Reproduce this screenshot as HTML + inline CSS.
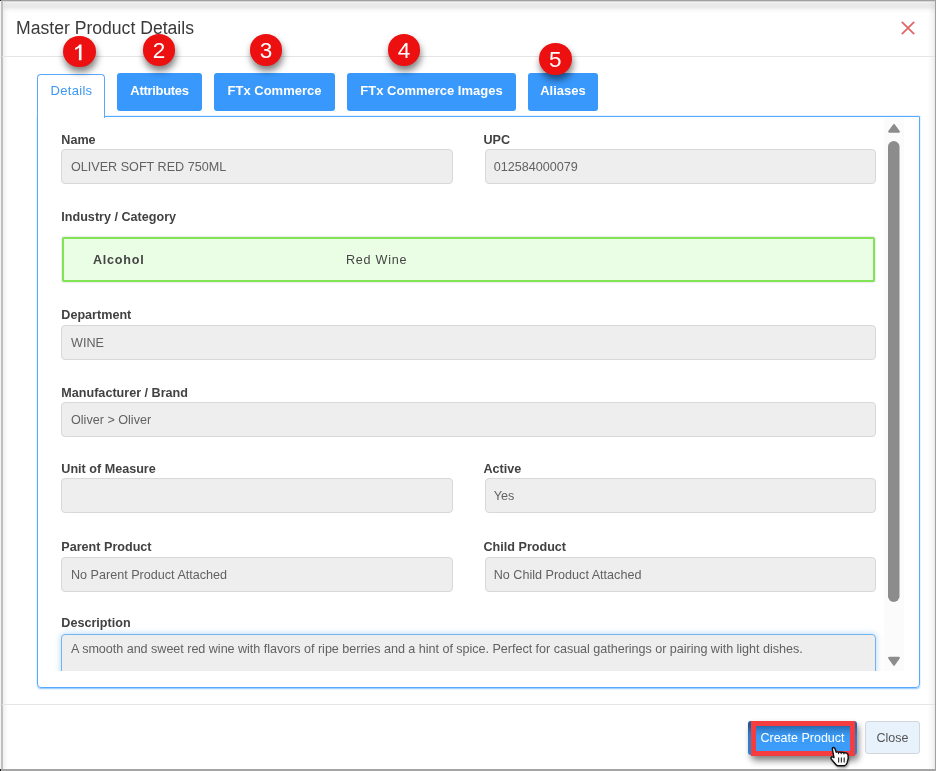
<!DOCTYPE html>
<html><head><meta charset="utf-8">
<style>
*{box-sizing:border-box;margin:0;padding:0}
html,body{width:936px;height:771px;overflow:hidden;background:#fff;font-family:"Liberation Sans",sans-serif;}
.a{position:absolute}
.frame{position:absolute;left:0;top:0;width:936px;height:771px;background:#fff;overflow:hidden;will-change:transform}
.sh-top{position:absolute;left:0;top:0;width:936px;height:14px;background:linear-gradient(#a0a0a0 0px,#a0a0a0 1px,#d8d8d8 1px,#d8d8d8 2px,#f2f2f2 2px,#eeeeee 3px,#e9e9e9 4px,#e9e9e9 7px,#eeeeee 8px,#f3f3f3 9px,#f8f8f8 10px,#fbfbfb 11px,#fdfdfd 12px,#ffffff 13px)}
.sh-left{position:absolute;left:0;top:0;width:10px;height:770px;background:linear-gradient(90deg,#f3f3f3 0px,#f3f3f3 1px,#bcbcbc 1px,#c2c2c2 3px,rgba(225,225,225,.5) 3px,rgba(225,225,225,.45) 4px,rgba(225,225,225,.3) 5px,rgba(225,225,225,.2) 6px,rgba(225,225,225,.12) 7px,rgba(225,225,225,.05) 8px,rgba(255,255,255,0) 10px)}
.sh-right{position:absolute;left:926px;top:0;width:10px;height:770px;background:linear-gradient(270deg,#a0a0a0 0px,#a0a0a0 1px,rgba(200,200,200,.36) 1px,rgba(200,200,200,.27) 2px,rgba(200,200,200,.22) 3px,rgba(200,200,200,.16) 4px,rgba(200,200,200,.11) 5px,rgba(200,200,200,.07) 6px,rgba(200,200,200,.04) 7px,rgba(255,255,255,0) 9px)}
.sh-bot{position:absolute;left:0;top:769px;width:936px;height:2px;background:#a5a5a5}
.title{position:absolute;left:16px;top:18px;font-size:17.6px;color:#3a3a3a;white-space:nowrap}
.xclose{position:absolute;left:901px;top:20.5px;width:14px;height:14px}
.hline{position:absolute;left:2px;top:56px;width:933px;height:1px;background:#e5e5e5}
.fline{position:absolute;left:2px;top:704px;width:933px;height:1px;background:#e5e5e5}
.panel{position:absolute;left:37px;top:116px;width:883px;height:572px;border:1px solid #58aaff;border-radius:0 0 4px 4px;box-shadow:0 0.4px 1.6px rgba(100,175,255,.75)}
.tab{position:absolute;top:73px;height:37.5px;background:#3898fc;color:#fff;font-size:13px;font-weight:bold;text-align:center;line-height:35px;border-radius:3px;white-space:nowrap}
.tab.active{top:74px;height:44px;letter-spacing:.3px;background:#fff;color:#3e97f2;font-weight:normal;border:1.2px solid #58aaff;border-bottom:none;border-radius:4px 4px 0 0;line-height:32px;padding-left:1px;z-index:2}
.badge{position:absolute;width:32.5px;height:31.5px;border-radius:50%;background:#ec1010;color:#fff;font-size:22.5px;text-align:center;line-height:34.5px;box-shadow:1px 5px 7px rgba(0,0,0,.5);z-index:5}
.lbl{position:absolute;font-size:12.6px;font-weight:bold;color:#424242;white-space:nowrap}
.inp{position:absolute;height:35px;background:#eeeeee;border:1px solid #d8d8d8;border-radius:4px;font-size:12.6px;color:#626262;line-height:35px;padding-left:9px;white-space:nowrap;overflow:hidden}
.green{position:absolute;left:62px;top:237px;width:813px;height:45px;background:#eafee6;border:2px solid #80e455;border-radius:2px;box-shadow:0 0 2px rgba(0,0,0,.25)}
.sb{position:absolute;left:884px;top:118px;width:20px;height:553px;background:#fbfbfb}
.thumb{position:absolute;left:888px;top:141px;width:11.5px;height:461px;background:#8c8c8c;border-radius:6px}
.btn-blue{position:absolute;left:748px;top:721px;width:109px;height:34px;border-radius:3px;background:linear-gradient(#2a6ab0 0px,#2a6ab0 5px,#2e76c2 7px,#3388dc 10px,#3896ef 14px,#3a9bf8 18px,#3c9dfa);box-shadow:inset 6px 0 5px -3px rgba(0,0,0,.18),2px 4px 6px rgba(0,0,0,.28)}
.btn-red{position:absolute;left:751px;top:721px;width:104px;height:35px;border:5px solid #f53c3e;box-shadow:2px 5px 7px rgba(0,0,0,.32)}
.btn-txt{position:absolute;left:748px;top:721px;width:109px;height:34px;color:#fff;font-size:12.5px;text-align:center;line-height:34px;white-space:nowrap}
.btn-close{position:absolute;left:865px;top:721px;width:55px;height:33px;background:#e8f2fc;border:1px solid #d2d6da;border-radius:3px;color:#555;font-size:12.5px;text-align:center;line-height:33px}
</style></head><body>
<div class="frame">
  <div class="sh-top"></div><div class="sh-left"></div><div class="sh-right"></div><div class="sh-bot"></div><div class="a" style="left:0;top:0;width:936px;height:1px;background:#a0a0a0"></div><div class="a" style="left:0;top:0;width:1px;height:1px;background:#222"></div><div class="a" style="left:0;top:769px;width:1px;height:2px;background:#222"></div>

  <div class="title">Master Product Details</div>
  <svg class="xclose" viewBox="0 0 14 14"><path d="M0.8 0.8L13.2 13.2M13.2 0.8L0.8 13.2" stroke="#e06464" stroke-width="1.7"/></svg>
  <div class="hline"></div>

  <div class="panel"></div>
  <div class="tab active" style="left:37px;width:68px">Details</div>
  <div class="tab" style="left:117px;width:85px;letter-spacing:-.3px">Attributes</div>
  <div class="tab" style="left:214px;width:121px">FTx Commerce</div>
  <div class="tab" style="left:347px;width:169px">FTx Commerce Images</div>
  <div class="tab" style="left:528px;width:70px">Aliases</div>

  <div class="badge" style="left:63.35px;top:35.55px"><svg class="a" style="left:0;top:0" width="32.5" height="31.5" viewBox="0 0 32.5 31.5"><path d="M16.5 8.4 H18.5 V24.35 H15.9 V11.7 Q14.4 13.1 12.1 13.9 V11.9 Q15.1 10.5 16.5 8.4Z" fill="#fff"/></svg></div>
  <div class="badge" style="left:142.75px;top:34.35px">2</div>
  <div class="badge" style="left:249.65px;top:34.25px">3</div>
  <div class="badge" style="left:387.85px;top:34.15px">4</div>
  <div class="badge" style="left:539.05px;top:43.25px">5</div>

  <div class="lbl" style="left:61.3px;top:132.5px">Name</div>
  <div class="inp" style="left:61px;top:149px;width:392px">OLIVER SOFT RED 750ML</div>
  <div class="lbl" style="left:483.5px;top:132.5px">UPC</div>
  <div class="inp" style="padding-left:7.7px;left:485px;top:149px;width:391px">012584000079</div>

  <div class="lbl" style="left:61.3px;top:209.8px">Industry / Category</div>
  <div class="green"><span class="a" style="left:29px;top:14px;font-size:12.6px;font-weight:bold;color:#444;letter-spacing:.75px">Alcohol</span><span class="a" style="left:282px;top:14px;font-size:12.6px;color:#444;letter-spacing:.75px">Red Wine</span></div>

  <div class="lbl" style="left:61.3px;top:308.3px">Department</div>
  <div class="inp" style="left:61px;top:325px;width:815px">WINE</div>

  <div class="lbl" style="left:61.3px;top:385.5px">Manufacturer / Brand</div>
  <div class="inp" style="left:61px;top:402px;width:815px">Oliver &gt; Oliver</div>

  <div class="lbl" style="left:61.3px;top:462.4px">Unit of Measure</div>
  <div class="inp" style="left:61px;top:478px;width:392px"></div>
  <div class="lbl" style="left:483.5px;top:462.4px">Active</div>
  <div class="inp" style="padding-left:7.7px;left:485px;top:478px;width:391px">Yes</div>

  <div class="lbl" style="left:61.3px;top:539.5px">Parent Product</div>
  <div class="inp" style="left:61px;top:557px;width:392px">No Parent Product Attached</div>
  <div class="lbl" style="left:483.5px;top:539.5px">Child Product</div>
  <div class="inp" style="padding-left:7.7px;left:485px;top:557px;width:391px">No Child Product Attached</div>

  <div class="lbl" style="left:61.3px;top:616.2px">Description</div>
  <div class="a" style="left:39px;top:625px;width:845px;height:46px;overflow:hidden">
    <div class="inp" style="left:22px;top:9px;width:815px;height:50px;border:1.6px solid #74b4ee;box-shadow:0 0 6px rgba(102,175,233,.5);line-height:18px;padding-top:5px;letter-spacing:-.035px">A smooth and sweet red wine with flavors of ripe berries and a hint of spice. Perfect for casual gatherings or pairing with light dishes.</div>
  </div>

  <div class="sb"></div>
  <svg class="a" style="left:880px;top:135px" width="30" height="475"><rect x="8" y="6" width="11.5" height="461" rx="5.75" fill="#8c8c8c"/></svg>
  <svg class="a" style="left:887px;top:123px" width="14" height="11" viewBox="0 0 14 11"><path d="M7 2.2L11.8 8.6H2.2Z" fill="#8c8c8c" stroke="#8c8c8c" stroke-width="2.2" stroke-linejoin="round"/></svg>
  <svg class="a" style="left:887px;top:656px" width="14" height="11" viewBox="0 0 14 11"><path d="M2.2 1.9H11.8L7 8.5Z" fill="#8c8c8c" stroke="#8c8c8c" stroke-width="2.2" stroke-linejoin="round"/></svg>

  <div class="fline"></div>
  <div class="btn-blue"></div>
  <div class="btn-red"></div>
  <div class="btn-txt">Create Product</div>
  <div class="btn-close">Close</div>
  <svg class="a" style="left:824px;top:740px" width="32" height="31" viewBox="0 0 32 31"><defs><filter id="cs" x="-30%" y="-30%" width="160%" height="160%"><feGaussianBlur stdDeviation="1.6"/></filter></defs><g transform="translate(4 4)"><path d="M4.3 4.8 Q5 2.5 6.8 4.2 L8.2 8.3 Q9.4 7.4 10.6 8.5 Q11.8 7.6 13.2 8.6 Q14.5 7.8 15.9 8.9 Q18.5 8.3 20 10.5 L20.2 14.5 L19 19 Q18 21.5 16.5 21.8 L9.5 21.8 Q8 21 7 19.5 L3.2 15 Q2.4 13.6 3.7 13 Q4.8 12.6 6 13.6 Z" fill="#000" opacity=".45" transform="translate(1 2)" filter="url(#cs)"/><path d="M4.3 4.8 Q5 2.5 6.8 4.2 L8.2 8.3 Q9.4 7.4 10.6 8.5 Q11.8 7.6 13.2 8.6 Q14.5 7.8 15.9 8.9 Q18.5 8.3 20 10.5 L20.2 14.5 L19 19 Q18 21.5 16.5 21.8 L9.5 21.8 Q8 21 7 19.5 L3.2 15 Q2.4 13.6 3.7 13 Q4.8 12.6 6 13.6 Z" fill="#fff" stroke="#111" stroke-width="1.4" stroke-linejoin="round"/><path d="M10.6 8.3V10.2M13.2 8.4V10.2M15.9 8.7V10.4" stroke="#111" stroke-width="1"/><path d="M10.6 13.5V18.5M13.4 13.5V18.5M16.2 13.5V18.5" stroke="#333" stroke-width="1.2"/></g></svg>
</div>
</body></html>
